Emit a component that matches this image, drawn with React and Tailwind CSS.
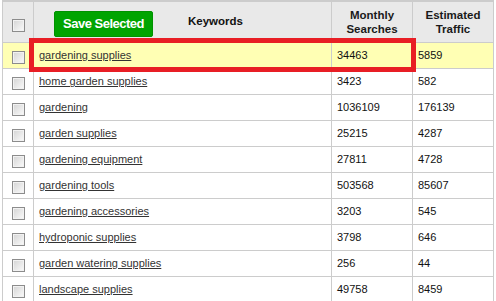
const rows = [
  ['gardening supplies', '34463', '5859'],
  ['home garden supplies', '3423', '582'],
  ['gardening', '1036109', '176139'],
  ['garden supplies', '25215', '4287'],
  ['gardening equipment', '27811', '4728'],
  ['gardening tools', '503568', '85607'],
  ['gardening accessories', '3203', '545'],
  ['hydroponic supplies', '3798', '646'],
  ['garden watering supplies', '256', '44'],
  ['landscape supplies', '49758', '8459'],
]

const Checkbox = () => (
  <div className="w-[13px] h-[13px] border border-[#8c8c8c] bg-gradient-to-br from-[#d4d4d4] to-[#fbfbfb] shadow-[inset_0_0_0_1px_#f2f2f2]" />
)

export default function App() {
  return (
    <div className="h-[301px] w-[496px] overflow-hidden bg-white font-['Liberation_Sans',Arial,sans-serif]">
      <div className="relative ml-[2px] w-[492px] border-t-2 border-[#cccccc]">
        <div className="grid grid-cols-[31px_298px_81px_82px] text-[11px] text-[#111]">
          {/* Header */}
          <div className="h-[41px] bg-[#e9e9e9] border-l border-b border-[#cccccc] flex justify-center items-start pt-[17px]">
            <Checkbox />
          </div>
          <div className="h-[41px] bg-[#e9e9e9] border-l border-b border-[#cccccc] flex items-center pl-[20px]">
            <button className="h-[26px] w-[99px] mt-[3px] rounded-[2px] bg-[#00a400] border border-[#009200] text-white font-bold text-[13px] tracking-[-0.5px]">
              Save Selected
            </button>
            <span className="ml-[35px] font-bold text-[11.5px] text-[#111]">Keywords</span>
          </div>
          <div className="h-[41px] bg-[#e9e9e9] border-l border-b border-[#cccccc] flex items-center justify-center text-center font-bold text-[11.5px] leading-[14px] text-[#1a1a1a]">
            Monthly<br />Searches
          </div>
          <div className="h-[41px] bg-[#e9e9e9] border-l border-r border-b border-[#cccccc] flex items-center justify-center text-center font-bold text-[11.5px] leading-[14px] text-[#1a1a1a]">
            Estimated<br />Traffic
          </div>

          {/* Rows */}
          {rows.map(([kw, searches, traffic], i) => {
            const bg = i === 0 ? 'bg-[#ffffb4]' : 'bg-white'
            return [
              <div key={kw + 'c'} className={`h-[26px] ${bg} border-l border-b border-[#cccccc] flex justify-center items-start pt-[8px]`}>
                <Checkbox />
              </div>,
              <div key={kw + 'k'} className={`h-[26px] ${bg} border-l border-b border-[#cccccc] flex items-center pl-[5px]`}>
                <a href="#" className="text-[#333] underline">{kw}</a>
              </div>,
              <div key={kw + 's'} className={`h-[26px] ${bg} border-l border-b border-[#cccccc] flex items-center pl-[5px]`}>
                {searches}
              </div>,
              <div key={kw + 't'} className={`h-[26px] ${bg} border-l border-r border-b border-[#cccccc] flex items-center pl-[5px]`}>
                {traffic}
              </div>,
            ]
          })}
        </div>

        {/* highlight box */}
        <div className="absolute left-[27px] top-[36px] w-[387px] h-[34px] border-[5px] border-[#e81e25]" />
      </div>
    </div>
  )
}
